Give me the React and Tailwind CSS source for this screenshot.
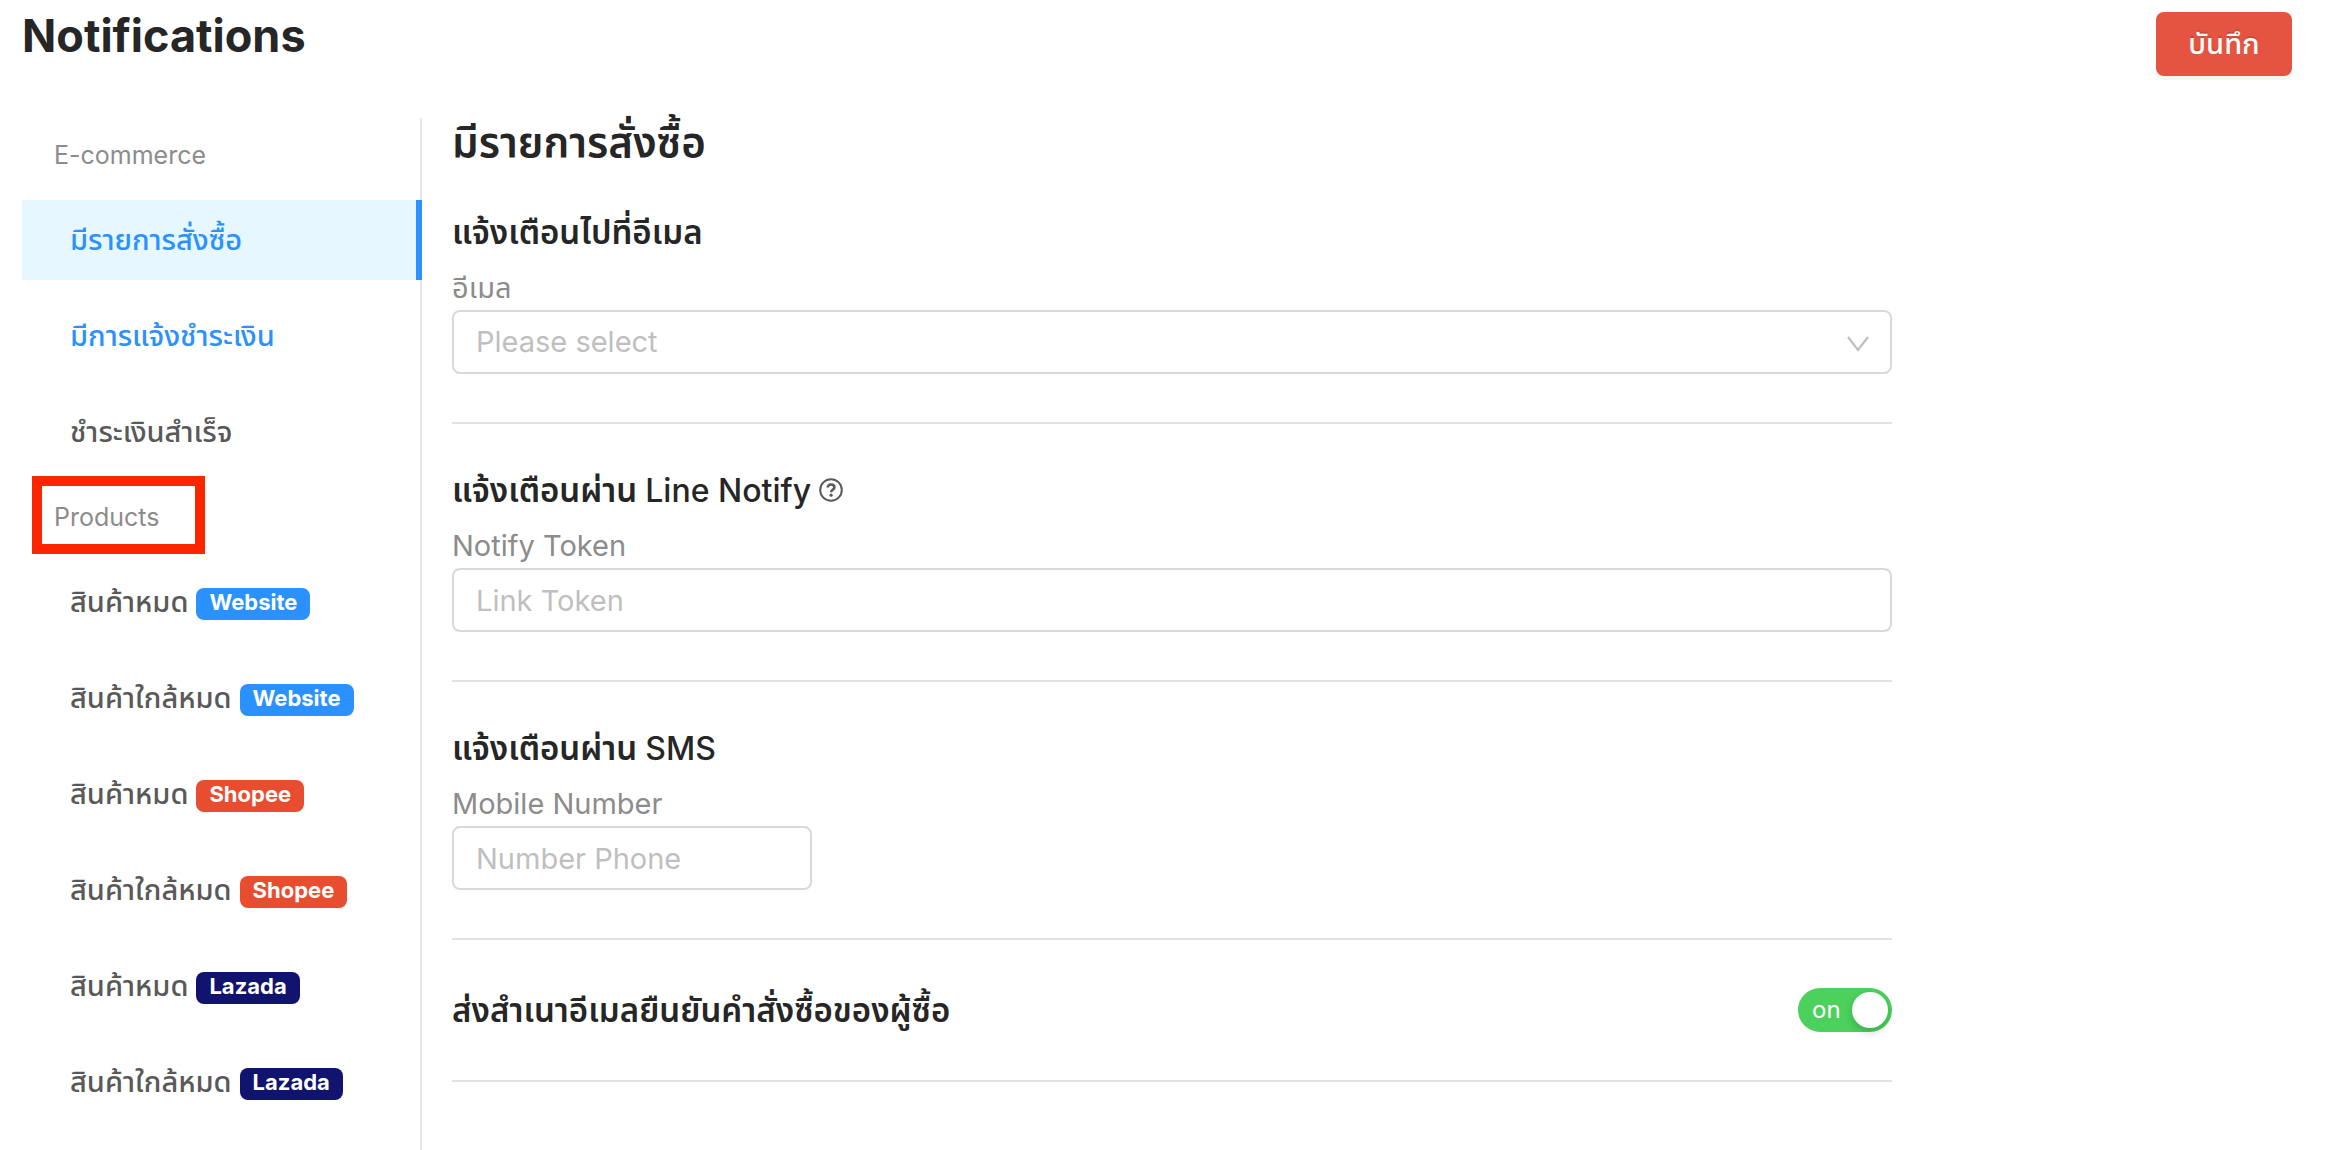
import { useState } from 'react';

const menuGroups = [
  {
    title: 'E-commerce',
    items: [
      { id: 'order', label: 'มีรายการสั่งซื้อ', highlight: true },
      { id: 'payment', label: 'มีการแจ้งชำระเงิน', highlight: true },
      { id: 'paid', label: 'ชำระเงินสำเร็จ' },
    ],
  },
  {
    title: 'Products',
    marked: true,
    items: [
      { id: 'web-out', label: 'สินค้าหมด', channel: 'Website' },
      { id: 'web-low', label: 'สินค้าใกล้หมด', channel: 'Website' },
      { id: 'shopee-out', label: 'สินค้าหมด', channel: 'Shopee' },
      { id: 'shopee-low', label: 'สินค้าใกล้หมด', channel: 'Shopee' },
      { id: 'lazada-out', label: 'สินค้าหมด', channel: 'Lazada' },
      { id: 'lazada-low', label: 'สินค้าใกล้หมด', channel: 'Lazada' },
    ],
  },
];

const channelColors = {
  Website: 'bg-[#2a91ff]',
  Shopee: 'bg-[#e94d30]',
  Lazada: 'bg-[#10146e]',
};

const fieldClass =
  'block h-16 rounded-lg border-2 border-[#d9d9d9] bg-white px-[22px] text-[29px] text-[#262626] outline-none placeholder:text-[#bfbfbf] placeholder:opacity-100';

function MenuItem({ item, active, onSelect }) {
  const textColor = active || item.highlight ? 'text-[#2a91ff]' : 'text-[#595959]';

  return (
    <li className="my-2">
      <a
        href={`#${item.id}`}
        onClick={() => onSelect(item.id)}
        className={`-mr-0.5 flex h-20 items-center gap-2 pl-12 text-[29px] font-medium whitespace-nowrap ${textColor} ${
          active ? 'border-r-6 border-[#2a91ff] bg-[#e6f7ff]' : ''
        }`}
      >
        {item.label}
        {item.channel && (
          <span
            className={`mt-1 rounded-lg px-[13px] pb-1 text-[22px] leading-7 font-bold text-white ${channelColors[item.channel]}`}
          >
            {item.channel}
          </span>
        )}
      </a>
    </li>
  );
}

function Sidebar({ selected, onSelect }) {
  return (
    <nav className="w-[400px] shrink-0 border-r-2 border-[#e8e8e8]">
      {menuGroups.map((group) => (
        <div key={group.title} className="flow-root">
          <h2 className="relative px-8 py-4 text-[25px] leading-[42px] text-[#8c8c8c]">
            {group.title}
            {group.marked && (
              <span className="absolute -top-1 bottom-0 left-2.5 w-[173px] border-10 border-[#fb2600]" />
            )}
          </h2>
          <ul className="flex flex-col">
            {group.items.map((item) => (
              <MenuItem key={item.id} item={item} active={item.id === selected} onSelect={onSelect} />
            ))}
          </ul>
        </div>
      ))}
    </nav>
  );
}

function Section({ title, suffix, label, htmlFor, help, children }) {
  return (
    <section className="border-b-2 border-[#e0e2e4] pt-11 pb-12">
      <h3 className="flex h-11 items-baseline gap-2 text-[33px] leading-11 font-semibold text-[#262626]">
        {title}
        {suffix && <span className="text-[32px] font-medium">{suffix}</span>}
        {help && <HelpIcon />}
      </h3>
      <label htmlFor={htmlFor} className="mt-3.5 mb-0.5 block text-[29px] leading-10 text-[#8c8c8c]">
        {label}
      </label>
      {children}
    </section>
  );
}

function HelpIcon() {
  return (
    <svg viewBox="0 0 24 24" className="size-6 self-center text-[#595959]" fill="none" stroke="currentColor">
      <circle cx="12" cy="12" r="10.8" strokeWidth="2" />
      <path d="M8.7 9.6c0-1.9 1.4-3.1 3.3-3.1s3.4 1.2 3.4 2.9c0 2.2-3.2 2.2-3.2 4.8" strokeWidth="2.6" />
      <circle cx="12.1" cy="17.2" r="1.6" fill="currentColor" stroke="none" />
    </svg>
  );
}

function App() {
  const [selected, setSelected] = useState('order');
  const [sendCopy, setSendCopy] = useState(true);

  return (
    <div className="min-h-screen bg-white pl-[22px] font-['Inter','Noto_Sans_Thai',sans-serif]">
      <header className="flex items-start justify-between pt-3 pr-10 pb-[42px]">
        <h1 className="text-[45px] leading-12 font-bold text-[#262626]">Notifications</h1>
        <button
          type="button"
          className="h-16 w-[136px] rounded-lg bg-[#e45440] text-[29px] font-medium text-white shadow-[0_4px_0_rgba(0,0,0,0.04)] text-shadow-[0_-2px_0_rgba(0,0,0,0.12)]"
        >
          บันทึก
        </button>
      </header>

      <div className="flex min-h-[calc(100vh-118px)]">
        <Sidebar selected={selected} onSelect={setSelected} />

        <main className="ml-[30px] max-w-[1440px] min-w-0 flex-1">
          <h2 className="text-[42px] leading-12 font-semibold text-[#262626]">มีรายการสั่งซื้อ</h2>

          <Section title="แจ้งเตือนไปที่อีเมล" label="อีเมล" htmlFor="email">
            <div className="relative">
              <select id="email" defaultValue="" className={`${fieldClass} w-full appearance-none text-[#bfbfbf]`}>
                <option value="">Please select</option>
              </select>
              <svg
                viewBox="0 0 22 16"
                className="pointer-events-none absolute top-[26px] right-[23px] h-4 w-[22px] text-[#bfbfbf]"
                fill="none"
                stroke="currentColor"
                strokeWidth="2.2"
              >
                <path d="M1 1l10 13L21 1" />
              </svg>
            </div>
          </Section>

          <Section title="แจ้งเตือนผ่าน" suffix="Line Notify" label="Notify Token" htmlFor="token" help>
            <input id="token" type="text" placeholder="Link Token" className={`${fieldClass} w-full`} />
          </Section>

          <Section title="แจ้งเตือนผ่าน" suffix="SMS" label="Mobile Number" htmlFor="phone">
            <input id="phone" type="tel" placeholder="Number Phone" className={`${fieldClass} w-[360px]`} />
          </Section>

          <section className="flex items-center justify-between border-b-2 border-[#e0e2e4] py-12">
            <h3 id="copy-title" className="text-[33px] leading-11 font-semibold text-[#262626]">
              ส่งสำเนาอีเมลยืนยันคำสั่งซื้อของผู้ซื้อ
            </h3>
            <label className="relative flex h-11 w-[94px] cursor-pointer items-center rounded-full bg-gray-300 p-1 has-checked:bg-[#4bd15c]">
              <input
                type="checkbox"
                role="switch"
                aria-labelledby="copy-title"
                checked={sendCopy}
                onChange={(e) => setSendCopy(e.target.checked)}
                className="absolute inset-0 cursor-pointer appearance-none"
              />
              <span className="flex-1 pl-2.5 text-2xl leading-9 text-white">{sendCopy ? 'on' : 'off'}</span>
              <span className="size-9 rounded-full bg-white shadow-[0_4px_8px_rgba(0,35,11,0.2)]" />
            </label>
          </section>
        </main>
      </div>
    </div>
  );
}

export default App;
